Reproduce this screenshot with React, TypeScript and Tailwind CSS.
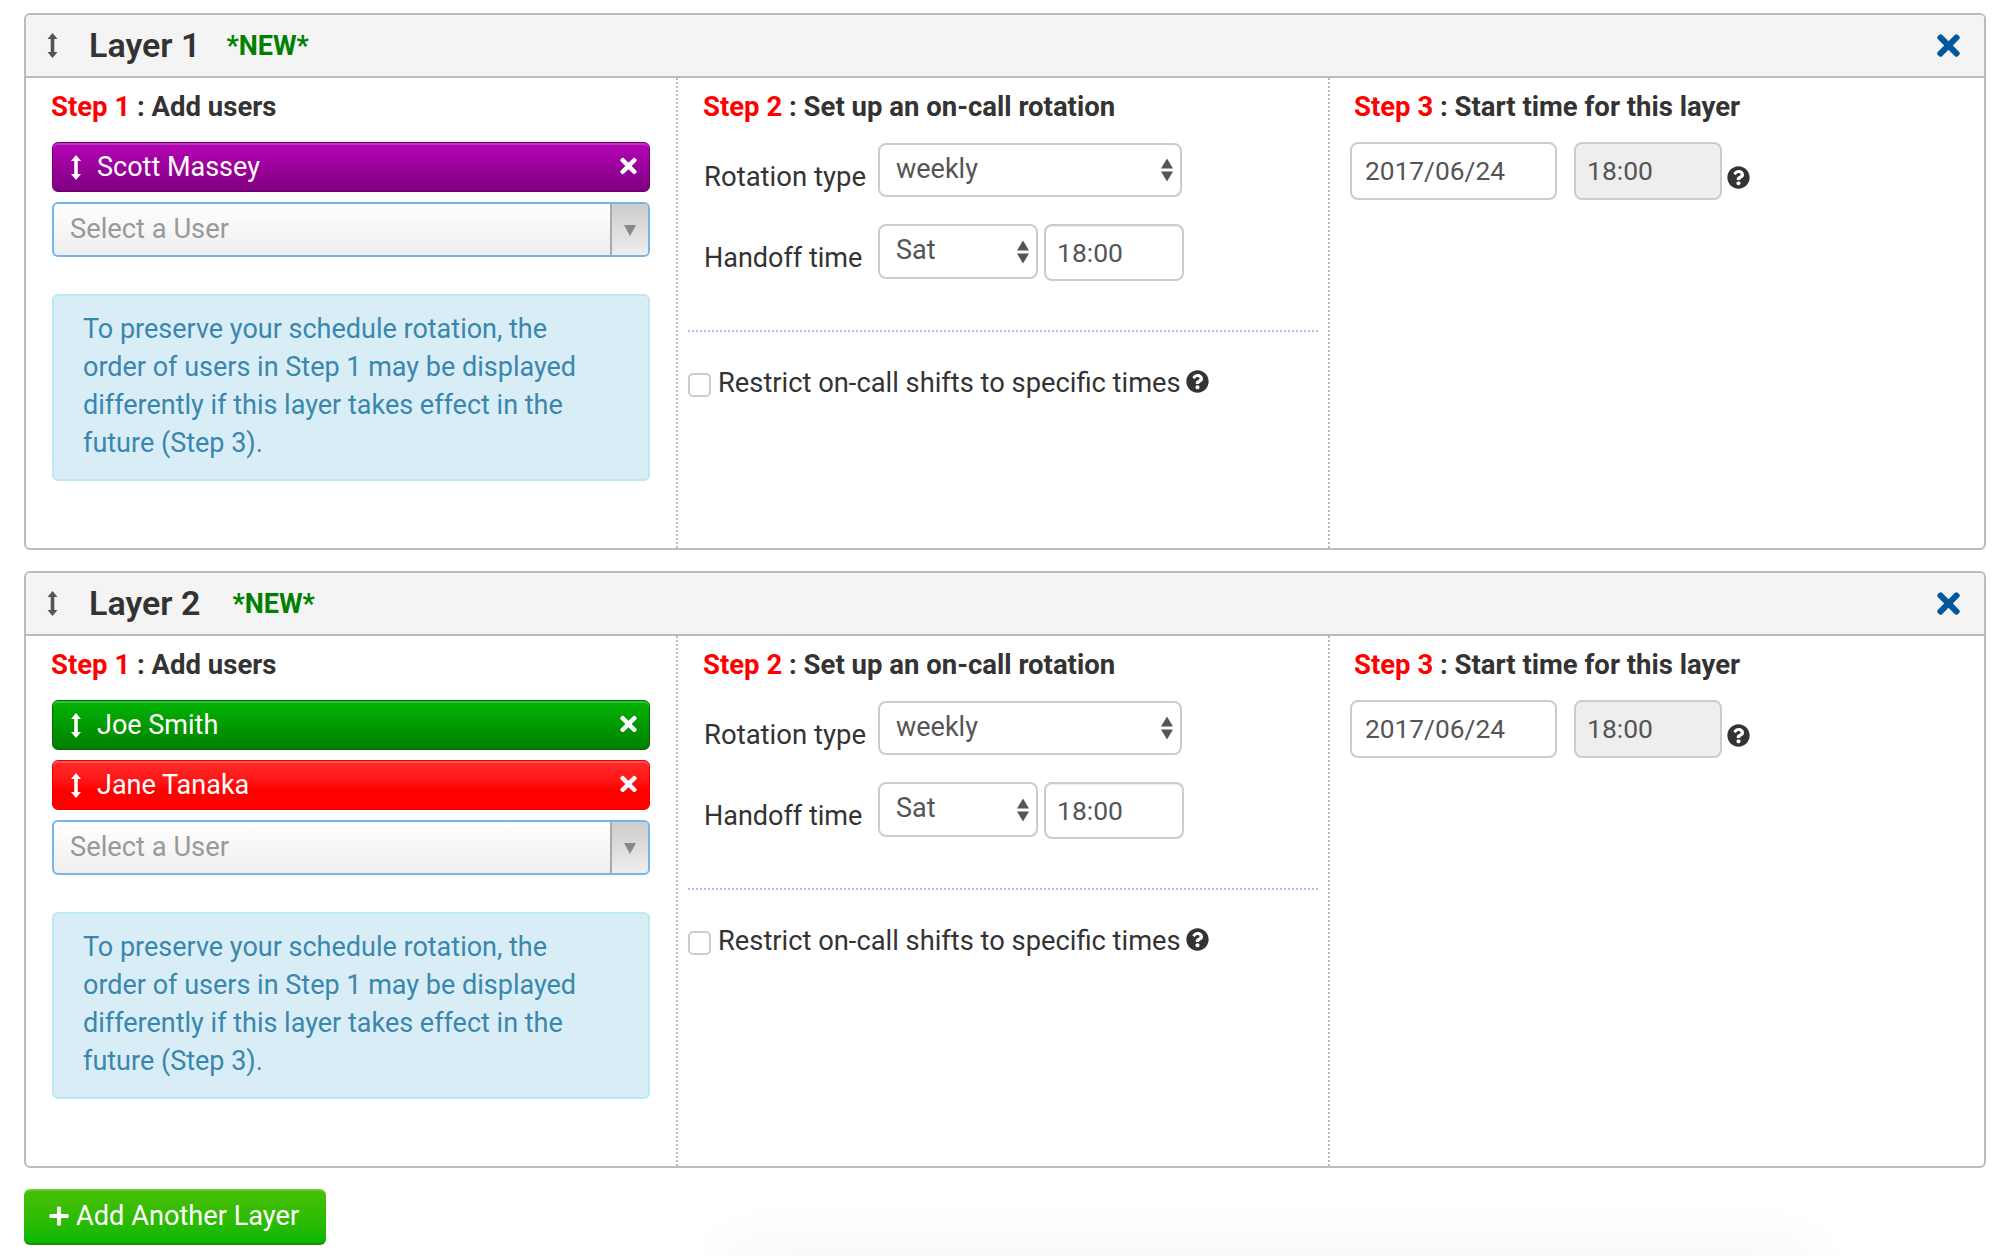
import React from 'react';
import { FaTimes, FaQuestionCircle, FaPlus } from 'react-icons/fa';

interface Member {
  name: string;
  chipClass: string;
}

interface LayerProps {
  title: string;
  members: Member[];
  bodyClass: string;
  tagClass: string;
}

const purple = 'bg-gradient-to-b from-[#b705b7] to-[#7f007f] border-[#6b006b] shadow-[inset_0_2px_0_rgba(255,255,255,0.18)]';
const green = 'bg-gradient-to-b from-[#05b505] to-[#007f00] border-[#006a00] shadow-[inset_0_2px_0_rgba(255,255,255,0.18)]';
const red = 'bg-gradient-to-b from-[#ff2a2a] to-[#ff0000] to-60% border-[#e60000] shadow-[inset_0_2px_0_rgba(255,255,255,0.18)]';

const DragArrow = ({ className }: { className: string }) => (
  <svg viewBox="0 0 10 25" className={className} fill="currentColor">
    <path d="M5 0 10 6H6.8V19H10L5 25 0 19H3.2V6H0Z" />
  </svg>
);

const UpDownCaret = () => (
  <svg viewBox="0 0 12 23" className="absolute right-[9px] top-1/2 h-[23px] w-[12px] -translate-y-1/2 pointer-events-none" fill="#555">
    <path d="M6 0 12 10H0Z" />
    <path d="M0 13H12L6 23Z" />
  </svg>
);

const StepTitle = ({ step, text }: { step: string; text: string }) => (
  <h3 className="text-[27.5px] leading-[32px] font-bold text-[#333]">
    <span className="text-[#ff0000]">{step}</span> : {text}
  </h3>
);

const UserChip = ({ name, chipClass }: Member) => (
  <div className={`h-[50px] rounded-[6px] border flex items-center text-white pl-[18px] pr-[12px] ${chipClass}`}>
    <DragArrow className="w-[10px] h-[25px] shrink-0" />
    <span className="ml-[16px] text-[27px] flex-1">{name}</span>
    <FaTimes className="w-[17px] h-[24px] -mt-[3px]" />
  </div>
);

const Layer = ({ title, members, bodyClass, tagClass }: LayerProps) => (
  <section className="rounded-[6px] border-2 border-[#bbbbbb] overflow-hidden bg-white">
    <header className="h-[63px] bg-[#f4f4f4] border-b-2 border-[#bbbbbb] flex items-center pl-[21px] pr-[24px]">
      <DragArrow className="w-[11px] h-[25px] text-[#555]" />
      <h2 className="ml-[31px] text-[34px] font-semibold text-[#333]">{title}</h2>
      <span className={`mt-[2px] text-[27px] font-bold text-[#008000] ${tagClass}`}>*NEW*</span>
      <FaTimes className="ml-auto w-[23px] h-[33px] text-[#00579b]" />
    </header>
    <div className={`grid grid-cols-[650px_652px_1fr] ${bodyClass}`}>
      <div className="pl-[25px] pr-[26px] pt-[13px]">
        <StepTitle step="Step 1" text="Add users" />
        <div className="mt-[19px] ml-[1px] flex flex-col gap-[10px]">
          {members.map((m) => (
            <UserChip key={m.name} name={m.name} chipClass={m.chipClass} />
          ))}
          <div className="h-[55px] rounded-[6px] border-2 border-[#74b5ec] bg-gradient-to-b from-white to-[#eeeeee] flex overflow-hidden">
            <span className="flex-1 pl-[16px] text-[27.3px] leading-[50px] text-[#999]">Select a User</span>
            <span className="w-[38px] border-l-2 border-[#aaa] bg-gradient-to-b from-[#cccccc] to-[#eeeeee] flex items-center justify-center">
              <svg viewBox="0 0 12 12" className="w-[12px] h-[12px]" fill="#888">
                <path d="M0 1H12L6 12Z" />
              </svg>
            </span>
          </div>
        </div>
        <div className="mt-[37px] ml-[1px] h-[187px] rounded-[6px] border-2 border-[#bce8f1] bg-[#d9edf7] pl-[29px] pt-[14px] text-[27px] leading-[38px] text-[#3a87ad]">
          To preserve your schedule rotation, the
          <br />
          order of users in Step 1 may be displayed
          <br />
          differently if this layer takes effect in the
          <br />
          future (Step 3).
        </div>
      </div>

      <div className="border-l-2 border-dotted border-[#bbb] pl-[10px] pr-[10px] pt-[13px]">
        <div className="pl-[15px]">
          <StepTitle step="Step 2" text="Set up an on-call rotation" />
        </div>
        <div className="mt-[20px] pl-[16px] flex flex-col gap-[27px]">
          <div className="flex">
            <label className="w-[174px] pt-[15px] text-[27.5px] leading-[38px] text-[#333]">Rotation type</label>
            <div className="relative w-[304px] h-[54px]">
              <select defaultValue="weekly" className="w-full h-full appearance-none rounded-[8px] border-2 border-[#cccccc] bg-white pl-[16px] pb-[2px] text-[27px] text-[#555]">
                <option>weekly</option>
              </select>
              <UpDownCaret />
            </div>
          </div>
          <div className="flex">
            <label className="w-[174px] pt-[15px] text-[27px] leading-[38px] text-[#333]">Handoff time</label>
            <div className="relative w-[160px] h-[55px]">
              <select defaultValue="Sat" className="w-full h-full appearance-none rounded-[8px] border-2 border-[#cccccc] bg-white pl-[16px] pb-[2px] text-[27px] text-[#555]">
                <option>Sat</option>
              </select>
              <UpDownCaret />
            </div>
            <input
              defaultValue="18:00"
              className="ml-[6px] w-[140px] h-[57px] rounded-[8px] border-2 border-[#cccccc] bg-white pl-[11px] text-[26.5px] text-[#555] shadow-[inset_0_1px_1px_rgba(0,0,0,0.075)]"
            />
          </div>
        </div>
        <div className="mt-[49px] border-t-2 border-dotted border-[#bbbbee]" />
        <div className="mt-[40px] flex items-start">
          <input type="checkbox" className="mt-[1px] w-[23px] h-[24px] appearance-none rounded-[5px] border-2 border-[#cccccc] bg-white" />
          <span className="ml-[7px] -mt-[5px] text-[27.3px] leading-[32px] text-[#333]">Restrict on-call shifts to specific times</span>
          <FaQuestionCircle className="ml-[5px] -mt-[2px] w-[23px] h-[23px] text-[#333]" />
        </div>
      </div>

      <div className="border-l-2 border-dotted border-[#bbb] pl-[20px] pt-[13px]">
        <div className="pl-[4px]">
          <StepTitle step="Step 3" text="Start time for this layer" />
        </div>
        <div className="mt-[19px] flex">
          <input
            defaultValue="2017/06/24"
            className="w-[207px] h-[58px] rounded-[8px] border-2 border-[#cccccc] bg-white pl-[13px] pb-[1px] text-[26.3px] text-[#555]"
          />
          <input
            disabled
            defaultValue="18:00"
            className="ml-[17px] w-[148px] h-[58px] rounded-[8px] border-2 border-[#cccccc] bg-[#eeeeee] pl-[11px] pb-[2px] text-[26.5px] text-[#555]"
          />
          <FaQuestionCircle className="ml-[5px] mt-[24px] w-[23px] h-[23px] text-[#333]" />
        </div>
      </div>
    </div>
  </section>
);

const App: React.FC = () => {
  return (
    <div className="relative w-[1996px] h-[1256px] overflow-hidden bg-white pl-[24px] pr-[10px] pt-[13px] font-['Roboto',sans-serif]">
      <div className="absolute left-[720px] top-[1235px] w-[1100px] h-[60px] rounded-full bg-[#f9f9f9] blur-[20px]" />
      <div className="relative">
        <Layer
          title="Layer 1"
          tagClass="ml-[26px]"
          bodyClass="h-[470px]"
          members={[{ name: 'Scott Massey', chipClass: purple }]}
        />
        <div className="h-[21px]" />
        <Layer
          title="Layer 2"
          tagClass="ml-[32px]"
          bodyClass="h-[530px]"
          members={[
            { name: 'Joe Smith', chipClass: green },
            { name: 'Jane Tanaka', chipClass: red },
          ]}
        />
        <button className="mt-[21px] w-[302px] h-[56px] rounded-[6px] border-b-2 border-[#2a8a00] bg-gradient-to-b from-[#48bf06] to-[#00b800] shadow-[inset_0_2px_0_rgba(255,255,255,0.2)] text-white text-[27.2px] flex items-center pl-[25px]">
          <FaPlus className="w-[20px] h-[22px]" />
          <span className="ml-[7px]">Add Another Layer</span>
        </button>
      </div>
    </div>
  );
};

export default App;
